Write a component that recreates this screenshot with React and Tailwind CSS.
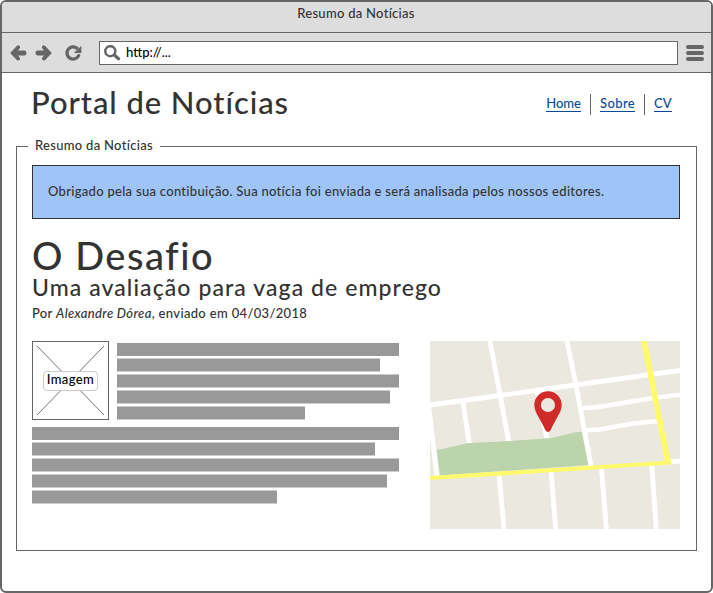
const FONT = "font-['Lato','Liberation_Sans',sans-serif]";

const chrome = '#666666';

function ArrowIcon({ flip = false }) {
  return (
    <svg width="17" height="16" viewBox="0 0 17 16" className={flip ? '-scale-x-100' : ''}>
      <path
        d="M0.2 7.9 L6.8 0.9 Q8 -0.2 9.5 0.7 Q10.6 2 9.6 3.4 L8 5.4 H14.6 Q16.5 5.7 16.5 7.9 Q16.5 10.1 14.6 10.4 H8 L9.6 12.4 Q10.6 13.8 9.5 15.1 Q8 16 6.8 14.9 Z"
        fill={chrome}
      />
    </svg>
  );
}

function ReloadIcon() {
  return (
    <svg width="17" height="16" viewBox="0 0 17 16">
      <path d="M11.8 3.1 A6.1 6.1 0 1 0 13.6 10.6" fill="none" stroke={chrome} strokeWidth="3.3" strokeLinecap="round" />
      <path d="M16.4 0.8 V8 H8.8 Z" fill={chrome} />
    </svg>
  );
}

function SearchIcon() {
  return (
    <svg width="17" height="16" viewBox="0 0 17 16">
      <circle cx="6.3" cy="6.2" r="5" fill="none" stroke={chrome} strokeWidth="2.5" />
      <path d="M10.3 10 L14.5 13.8" stroke={chrome} strokeWidth="3.2" strokeLinecap="round" />
    </svg>
  );
}

function CityMap() {
  return (
    <svg width="250" height="188" viewBox="0 0 250 188" className="block shrink-0">
      <rect width="250" height="188" fill="#ebe8df" />
      <g fill="none" stroke="#ffffff" strokeWidth="4.8">
        <path d="M0 64 L70 54.5 L145 44 L250 29.5" />
        <path d="M60 0 L70 54 L79 102" />
        <path d="M137 0 L146 44 L161 125" />
        <path d="M33 61 L39.5 104" />
        <path d="M-2 60 L7 136" />
        <path d="M107 50 L117 98" />
        <path d="M152 67.2 L168 66 L220 57.5 L250 53.7" strokeWidth="4.4" />
        <path d="M156 89.3 L170 88.5 L200 83 L227 80" strokeWidth="4.4" />
        <path d="M238 121 L250 120" />
        <path d="M69 133 L74 188" />
        <path d="M121 130 L125.7 188" />
        <path d="M171.5 127 L176.3 188" />
        <path d="M221.7 123 L226.3 188" />
      </g>
      <path d="M6.7 108.7 L13 108 L36.7 102.3 L80 100 L121.7 97 L145 91.2 L151.7 90.7 L158.3 124 L10 134.5 Z" fill="#bbd4ac" />
      <path d="M0 137 L241 121.5" stroke="#fffa6b" strokeWidth="4.2" />
      <path d="M214 0 L238 122" stroke="#fffa6b" strokeWidth="5.8" />
      <path
        fillRule="evenodd"
        fill="#d12a2a"
        d="M118 50.2 C110.4 50.2 104.3 56.2 104.3 63.8 C104.3 71.5 110.5 78 115.3 89 Q118 93 120.7 89 C125.5 78 131.7 71.5 131.7 63.8 C131.7 56.2 125.6 50.2 118 50.2 Z M118 57 A7 7 0 1 1 118 71 A7 7 0 1 1 118 57 Z"
      />
    </svg>
  );
}

function TextLines({ widths }) {
  return (
    <div className="flex flex-col gap-[2px]">
      {widths.map((w, i) => (
        <div
          key={i}
          className={i === 0 ? 'h-[13px] bg-[#999]' : 'h-[14px] border-y border-[#ccc] bg-[#999]'}
          style={{ width: w }}
        />
      ))}
    </div>
  );
}

function Placeholder() {
  return (
    <div className="grid h-[79px] w-[77px] shrink-0 place-items-center border border-[#666] bg-white">
      <svg width="75" height="77" viewBox="0 0 75 77" className="col-start-1 row-start-1">
        <path d="M4 4 L71 73 M71 4 L4 73" stroke="#777" strokeWidth="1" />
      </svg>
      <span className="z-10 col-start-1 row-start-1 flex h-5 w-[55px] items-center justify-center rounded-[4px] border border-[#ccc] bg-white/90 pb-px text-[13px] tracking-[0.4px] text-black">
        Imagem
      </span>
    </div>
  );
}

function NavLink({ children, className = '' }) {
  return (
    <a href="#" className={`h-[17px] border-b border-[#0b4a9a] text-[13px] leading-4 text-[#0b4a9a] ${className}`}>
      {children}
    </a>
  );
}

export default function App() {
  return (
    <div className={`flex h-[593px] w-[713px] flex-col overflow-hidden rounded-[6px] border-2 border-[#666] bg-white text-[13px] font-medium text-[#333] ${FONT}`}>
      <header className="h-[31px] border-b border-[#666] bg-[#ddd] text-center">
        <h1 className="pr-px text-[13px] leading-[22px] tracking-[0.28px]">Resumo da Notícias</h1>
      </header>
      <div className="flex h-10 shrink-0 items-center border-b border-[#666] bg-[#ddd] pl-2 pr-[7px]">
        <ArrowIcon />
        <span className="ml-2"><ArrowIcon flip /></span>
        <span className="ml-[13px]"><ReloadIcon /></span>
        <div className="ml-[17px] flex h-6 flex-1 items-center border border-[#666] bg-white pl-1">
          <SearchIcon />
          <span className="ml-[5px] pt-px text-[13px] text-black">http://...</span>
        </div>
        <div className="ml-2 flex w-[18px] flex-col gap-[2px]">
          <i className="h-1 rounded-full bg-[#666]" />
          <i className="h-1 rounded-full bg-[#666]" />
          <i className="h-1 rounded-full bg-[#666]" />
        </div>
      </div>

      <main className="px-[14px]">
        <div className="flex h-[63px] items-start justify-between pl-[15px] pr-[25px]">
          <h2 className="mt-[9px] text-[31px] leading-10 tracking-[0.93px]">Portal de Notícias</h2>
          <nav className="mt-[21px] flex h-[21px] items-center">
            <NavLink className="mb-[2px]">Home</NavLink>
            <i className="mx-[9px] h-[21px] w-px bg-[#666]" />
            <NavLink className="mb-[2px] w-[35px] tracking-[0.4px]">Sobre</NavLink>
            <i className="mx-[9px] h-[21px] w-px bg-[#666]" />
            <NavLink className="mb-[2px] w-[18px]">CV</NavLink>
          </nav>
        </div>

        <fieldset className="h-[415px] w-[681px] border border-[#666] px-[15px]">
          <legend className="-ml-1 h-5 w-[132px] pl-[7px] text-[13px] leading-[18px] tracking-[0.3px]">Resumo da Notícias</legend>
          <div className="mt-[9px] flex h-[54px] w-[648px] items-center border border-[#333] bg-[#9fc5f8] pl-[15px] tracking-[0.29px]">
            Obrigado pela sua contibuição. Sua notícia foi enviada e será analisada pelos nossos editores.
          </div>
          <h3 className="mt-[15px] text-[38px] leading-[42px] tracking-[1.55px]">O Desafio</h3>
          <h4 className="text-[23px] leading-[22px] tracking-[1.08px]">Uma avaliação para vaga de emprego</h4>
          <p className="mt-[6px] leading-[18px] tracking-[0.34px]">
            Por <em>Alexandre Dórea</em>, enviado em 04/03/2018
          </p>
          <div className="mt-[19px] flex w-[648px] justify-between">
            <div>
              <div className="flex gap-2">
                <Placeholder />
                <div className="pt-[2px]">
                  <TextLines widths={[282, 263, 282, 273, 188]} />
                </div>
              </div>
              <div className="mt-[7px]">
                <TextLines widths={[367, 343, 367, 355, 245]} />
              </div>
            </div>
            <CityMap />
          </div>
        </fieldset>
      </main>
    </div>
  );
}
